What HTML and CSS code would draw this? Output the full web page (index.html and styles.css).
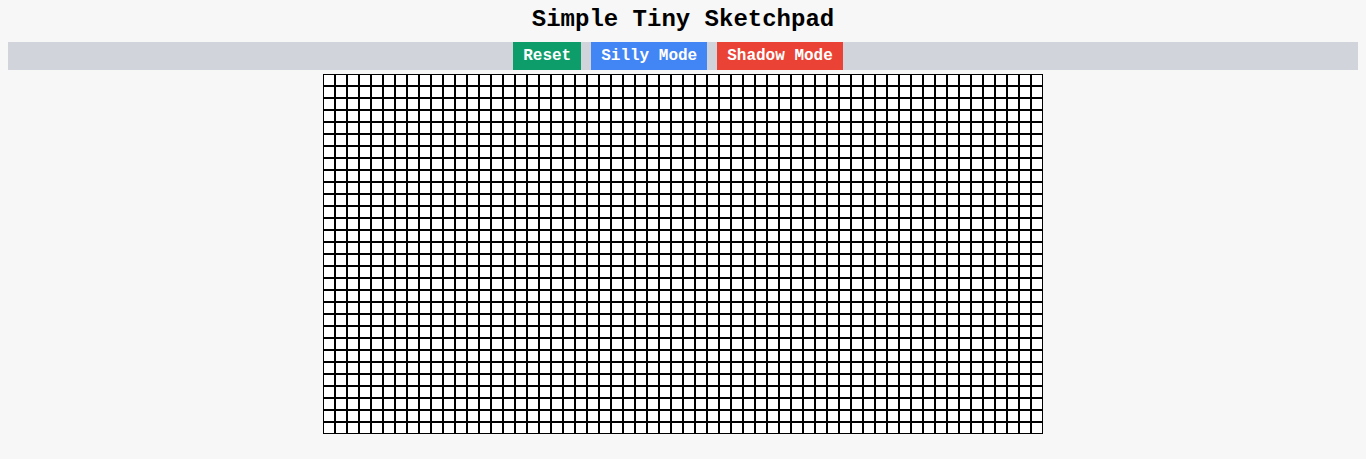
FILE: index.html
```html
<!DOCTYPE html>
<html>
<head>
<meta charset="utf-8">
<title>Simple Tiny Sketchpad</title>
<link rel="stylesheet" href="styles.css">
</head>
<body>
<h1 class="title">Simple Tiny Sketchpad</h1>
<div class="toolbar">
  <button class="btn btn-reset">Reset</button>
  <button class="btn btn-silly">Silly Mode</button>
  <button class="btn btn-shadow">Shadow Mode</button>
</div>
<div class="pad" id="pad"></div>
<script src="script.js"></script>
</body>
</html>
```

FILE: styles.css
```css
html, body {
  background: #f7f7f7;
}
body {
  margin: 0 8px 8px;
  font-family: "Liberation Mono", "Courier New", monospace;
}
.title {
  margin: 0;
  padding-top: 6px;
  height: 42px;
  box-sizing: border-box;
  font-size: 24px;
  line-height: 27px;
  font-weight: bold;
  text-align: center;
  color: #000;
}
.toolbar {
  display: flex;
  justify-content: center;
  height: 28px;
  background: #d1d5db;
}
.btn {
  border: none;
  margin: 0 10px 0 0;
  padding: 0 10px;
  height: 28px;
  font-family: "Liberation Mono", "Courier New", monospace;
  font-weight: bold;
  font-size: 16px;
  color: #fff;
  cursor: pointer;
}
.btn-reset { background: #0c9d6b; }
.btn-silly { background: #4285f4; }
.btn-shadow { background: #ea4335; }
.pad {
  display: grid;
  grid-template-columns: repeat(60, 12px);
  grid-auto-rows: 12px;
  width: 720px;
  margin: 4px auto 0;
}
.cell {
  box-sizing: border-box;
  border: 1px solid #000;
  background: #fff;
}
```

FILE: script.js
```js
var pad = document.getElementById('pad');
for (var i = 0; i < 60 * 30; i++) {
  var c = document.createElement('div');
  c.className = 'cell';
  pad.appendChild(c);
}
```
